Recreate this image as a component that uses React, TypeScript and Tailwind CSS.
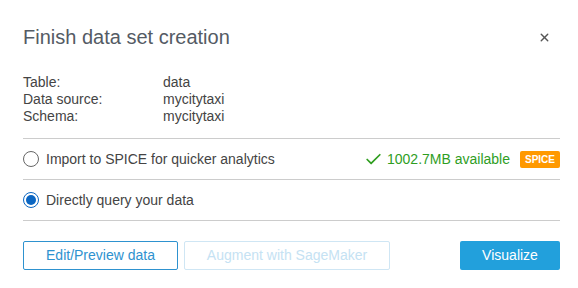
import { Check, X } from "lucide-react";

const DETAILS = [
  { label: "Table:", value: "data" },
  { label: "Data source:", value: "mycitytaxi" },
  { label: "Schema:", value: "mycitytaxi" },
];

function Radio({ checked }: { checked?: boolean }) {
  return (
    <span
      className={`flex h-[16px] w-[16px] shrink-0 items-center justify-center rounded-full border ${
        checked ? "border-[#0b66c2]" : "border-[#666]"
      }`}
    >
      {checked && <span className="h-[10px] w-[10px] rounded-full bg-[#0b66c2]" />}
    </span>
  );
}

export default function App() {
  return (
    <div className="h-[288px] w-[578px] bg-white pl-[23px] pr-[18px] text-[#444] [font-family:'Liberation_Sans',sans-serif]">
      <div className="flex items-center justify-between pt-[23px]">
        <h1 className="text-[20px] leading-[28px] text-[#545b64]">Finish data set creation</h1>
        <X className="mr-[9px] h-[13px] w-[13px] text-[#555]" strokeWidth={2.5} />
      </div>

      <div className="mt-[23px] flex flex-col pb-[13px] text-[14px] leading-[17px]">
        {DETAILS.map((d) => (
          <div key={d.label} className="flex">
            <span className="w-[140px]">{d.label}</span>
            <span>{d.value}</span>
          </div>
        ))}
      </div>

      <div className="flex h-[41px] items-center border-t border-[#ccc] text-[14px]">
        <Radio />
        <span className="ml-[7px]">Import to SPICE for quicker analytics</span>
        <span className="ml-auto flex items-center text-[#2f9e1f]">
          <Check className="h-[19px] w-[19px]" strokeWidth={2.2} />
          <span className="ml-[4px]">1002.7MB available</span>
        </span>
        <span className="ml-[10px] rounded-[2px] bg-[#ff9900] px-[5px] py-[2px] text-[10px] font-bold leading-[13px] text-white">
          SPICE
        </span>
      </div>

      <div className="flex h-[42px] items-center border-y border-[#ccc] text-[14px]">
        <Radio checked />
        <span className="ml-[7px]">Directly query your data</span>
      </div>

      <div className="mt-[20px] flex items-center text-[14px]">
        <button className="h-[29px] w-[155px] rounded-[2px] border border-[#2e92cf] text-[#2e92cf]">
          Edit/Preview data
        </button>
        <button className="ml-[6px] h-[29px] w-[206px] rounded-[2px] border border-[#cfe6f4] text-[#c5e2f3]">
          Augment with SageMaker
        </button>
        <button className="ml-auto h-[29px] w-[100px] rounded-[2px] bg-[#22a0dc] text-white">
          Visualize
        </button>
      </div>
    </div>
  );
}
